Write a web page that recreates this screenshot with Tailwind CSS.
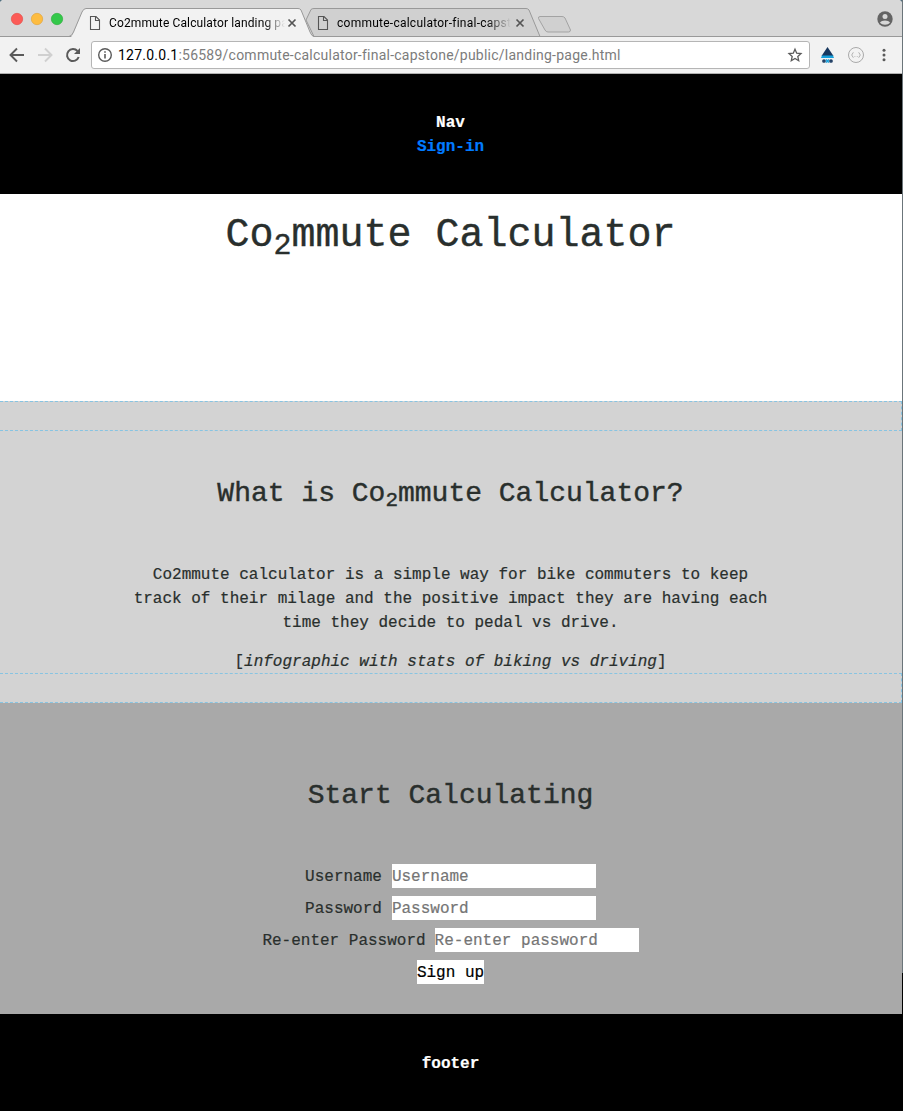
<!DOCTYPE html>
<html lang="en">
<head>
<meta charset="utf-8">
<title>Co2mmute Calculator landing page</title>
<script src="https://cdn.jsdelivr.net/npm/@tailwindcss/browser@4"></script>
</head>
<body class="h-[1111px] w-[903px] overflow-hidden bg-[#52707f]">
<div class="flex h-[1111px]">
<div class="flex w-[902px] flex-col">
  <header class="h-[74px] shrink-0 overflow-hidden rounded-t-[4px] border-b border-[#b0b0b0] bg-[#f2f2f2] font-['Roboto',sans-serif]">
    <div class="relative h-[37px] bg-[#d8d8d8]">
      <svg class="absolute inset-0" width="902" height="37" viewBox="0 0 902 37" fill="none">
        <path d="M0 36.5H902" stroke="#999"/>
        <path d="M306 20L311 9.500Q312 8.500 314 8.500H526Q528 8.500 529 10L540 36.500H314Z" fill="#d0d0d0" stroke="#999"/>
        <path d="M71 37Q73 35 74 32L82 12Q83.500 8.500 86 8.500H298Q300 8.500 301 10L310 32Q311 36 314 37Z" fill="#f2f2f2"/>
        <path d="M69 36.500Q72 36 73.500 32L82 12Q83.500 8.500 86 8.500H298Q300 8.500 301 10L310 32Q311.500 36 314 36.500" stroke="#999"/>
        <path d="M540 16.500H562Q564 16.500 565 18L570.500 30Q570.500 32 568.500 32H548Q546 32 545 30L538.500 18.500Q538 16.500 540 16.500Z" fill="#d0d0d0" stroke="#a3a3a3"/>
        <circle cx="17" cy="19" r="5.700" fill="#fc5b57" stroke="#e2463f" stroke-width=".6"/>
        <circle cx="37" cy="19" r="5.700" fill="#fdbc40" stroke="#dfa033" stroke-width=".6"/>
        <circle cx="57" cy="19" r="5.700" fill="#34c84a" stroke="#27aa35" stroke-width=".6"/>
        <g stroke="#555" stroke-width="1.100">
          <path d="M90.500 16.500H96L99.500 20V29.500H90.500ZM95.500 16.500V20.500H99.500"/>
          <path d="M318.500 16.500H324L327.500 20V29.500H318.500ZM323.500 16.500V20.500H327.500"/>
        </g>
        <path d="M288.500 19.500L295.500 26.500M295.500 19.500L288.500 26.500M516.500 19.500L523.500 26.500M523.500 19.500L516.500 26.500" stroke="#555" stroke-width="1.700"/>
        <circle cx="885" cy="19" r="7.700" fill="#646464"/>
        <circle cx="885" cy="16.500" r="2.500" fill="#d8d8d8"/>
        <path d="M880 22.500C881.500 19.800 888.500 19.800 890 22.500C888 25.500 882 25.500 880 22.500Z" fill="#d8d8d8"/>
      </svg>
      <div class="relative flex pl-[109px] pt-[14px] text-[12px] leading-[18px] text-black">
        <div class="w-[176px] overflow-hidden whitespace-nowrap mask-r-from-88% mask-r-to-100%"><span class="tracking-[.13px]">Co2mmute Calculator landing page</span></div>
        <div class="ml-[52px] w-[174px] overflow-hidden whitespace-nowrap mask-r-from-86% mask-r-to-100%"><span class="tracking-[.25px]">commute-calculator-final-capstone</span></div>
      </div>
    </div>
    <div class="flex h-[36px] items-center">
      <svg class="shrink-0" width="91" height="36" viewBox="0 37 91 36" fill="none">
        <path d="M24 55H11M17 48.500L10.500 55L17 61.500" stroke="#5a5a5a" stroke-width="1.900"/>
        <path d="M38 55H51M45 48.500L51.500 55L45 61.500" stroke="#d0d0d0" stroke-width="1.900"/>
        <path d="M77.500 51A6 6 0 1 0 78.700 57" stroke="#5a5a5a" stroke-width="2"/>
        <path d="M80 48V54H74Z" fill="#5a5a5a"/>
      </svg>
      <div class="flex h-[28px] w-[719px] items-center rounded-[3px] border border-[#b5b5b5] bg-white">
        <svg class="ml-[5px] shrink-0" width="16" height="16" viewBox="0 0 16 16" fill="none"><circle cx="8" cy="8" r="6.300" stroke="#5a5a5a" stroke-width="1.400"/><path d="M8 7V11.500M8 4.300V5.800" stroke="#5a5a5a" stroke-width="1.600"/></svg>
        <span class="ml-[5px] whitespace-nowrap text-[14px] leading-[20px] tracking-[.236px] text-[#7c7c7c]"><span class="text-black">127.0.0.1</span>:56589/commute-calculator-final-capstone/public/landing-page.html</span>
        <svg class="ml-auto mr-[6px]" width="16" height="16" viewBox="0 0 16 16" fill="none"><path d="M8 2.200L9.700 6.200L14 6.600L10.800 9.500L11.700 13.700L8 11.500L4.300 13.700L5.200 9.500L2 6.600L6.300 6.200Z" stroke="#5a5a5a" stroke-width="1.300"/></svg>
      </div>
      <svg class="shrink-0" width="92" height="36" viewBox="810 37 92 36" fill="none">
        <path d="M827.500 47L833.500 56H821.500Z" fill="#17375e"/><path d="M822 55.500H833L834 58H821Z" fill="#16a0db"/>
        <g stroke-width="1.500"><circle cx="824" cy="61" r="1.100" stroke="#17375e"/><path d="M826 59.500L829 62.500M829 59.500L826 62.500" stroke="#16a0db"/><circle cx="831" cy="61" r="1.100" stroke="#17375e"/></g>
        <circle cx="856" cy="55" r="7.500" stroke="#aaa"/>
        <path d="M853.500 52.500Q852.500 52.500 852.500 54L851.500 55L852.500 56Q852.500 57.500 853.500 57.500M858.500 52.500Q859.500 52.500 859.500 54L860.500 55L859.500 56Q859.500 57.500 858.500 57.500M854.500 56.500H855.300M856.800 56.500H857.600" stroke="#aaa" stroke-width=".9"/>
        <g fill="#5a5a5a"><circle cx="884" cy="50.300" r="1.500"/><circle cx="884" cy="55" r="1.500"/><circle cx="884" cy="59.700" r="1.500"/></g>
      </svg>
    </div>
  </header>
  <div class="flex flex-1 flex-col text-center font-['Liberation_Mono',monospace] text-[16px] leading-[24px] text-[#292f2d] [-webkit-text-stroke-width:.2px]">
    <nav class="h-[120px] bg-black pr-px pt-[37px] font-bold text-white">
      <p>Nav</p>
      <a class="block text-[#007bff]">Sign-in</a>
    </nav>
    <section class="h-[207px] bg-white pr-px pt-[18px]">
      <h1 class="text-[40px] leading-[48px] [-webkit-text-stroke-width:.4px]">Co<sub class="bottom-[-.25em] text-[75%]">2</sub>mmute Calculator</h1>
    </section>
    <div class="h-[30px] border-y border-r border-dashed border-[#87c4e2] bg-[#d3d3d3]"></div>
    <section class="h-[242px] bg-[#d3d3d3] pr-px pt-[46px]">
      <h2 class="text-[28px] leading-[34px] [-webkit-text-stroke-width:.4px]">What is Co<sub class="bottom-[-.25em] text-[75%]">2</sub>mmute Calculator?</h2>
      <p class="mt-[52px]">Co2mmute calculator is a simple way for bike commuters to keep<br>track of their milage and the positive impact they are having each<br>time they decide to pedal vs drive.</p>
      <p class="mt-[15px]">[<em>infographic with stats of biking vs driving</em>]</p>
    </section>
    <div class="h-[30px] border-y border-r border-dashed border-[#87c4e2] bg-[#d3d3d3]"></div>
    <section class="h-[311px] bg-[#a9a9a9] pr-px pt-[76px]">
      <h2 class="text-[28px] leading-[34px] [-webkit-text-stroke-width:.4px]">Start Calculating</h2>
      <form class="mt-[51px] flex flex-col items-center gap-[8px]">
        <label class="flex h-[24px] gap-[10px]"><span class="pt-px">Username</span><input class="w-[204px] bg-white pt-[2px] placeholder:text-[#757575]" placeholder="Username"></label>
        <label class="flex h-[24px] gap-[10px]"><span class="pt-px">Password</span><input type="password" class="w-[204px] bg-white pt-[2px] placeholder:text-[#757575]" placeholder="Password"></label>
        <label class="flex h-[24px] gap-[9px]"><span class="pt-px">Re-enter Password</span><input type="password" class="w-[204px] bg-white pt-[2px] placeholder:text-[#757575]" placeholder="Re-enter password"></label>
        <button type="button" class="h-[24px] bg-white pt-px text-black">Sign up</button>
      </form>
    </section>
    <footer class="flex-1 bg-black pr-px pt-[38px] font-bold text-white">footer</footer>
  </div>
</div>
<div class="flex w-px flex-col"><div class="h-[973px] bg-[#6b757a]"></div><div class="flex-1 bg-black"></div></div>
</div>
</body>
</html>
